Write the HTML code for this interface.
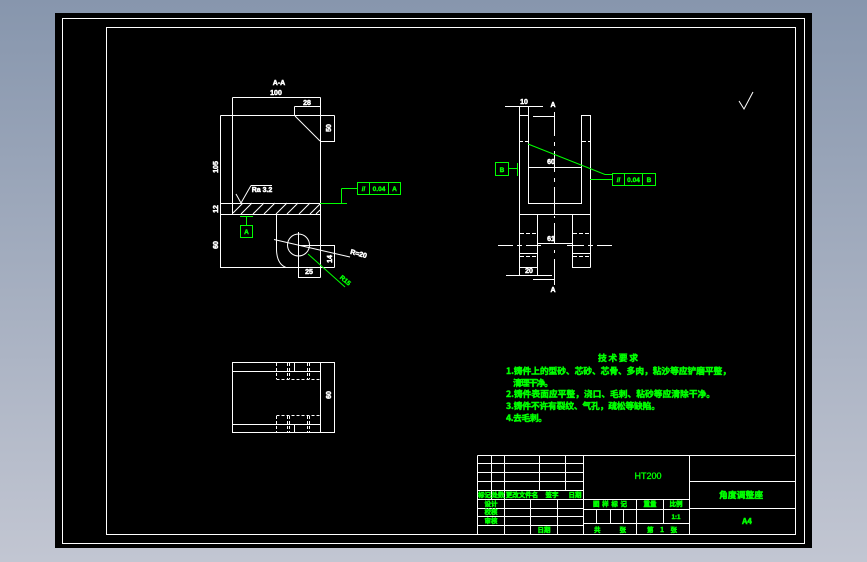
<!DOCTYPE html>
<html><head><meta charset="utf-8"><style>
html,body{margin:0;padding:0;width:867px;height:562px;overflow:hidden;background:linear-gradient(#8796ad,#c2c6d2)}
svg{position:absolute;left:0;top:0;display:block}
text{font-family:"Liberation Sans","Noto Sans CJK SC",sans-serif;font-weight:700}
.w path,.w rect,.w circle{fill:none;stroke:#fff;stroke-width:1}
.g path,.g rect{fill:none;stroke:#0f0;stroke-width:1}
.tw{fill:#fff;stroke:#fff;stroke-width:.5;font-size:7px;text-anchor:middle}
.tg{fill:#0f0;stroke:#0f0;stroke-width:.4;font-size:6.5px;text-anchor:middle}
.cn{fill:#0f0;font-size:8.8px;stroke:#0f0;stroke-width:.45;font-family:"Noto Sans CJK SC","Liberation Sans",sans-serif}
.tb{fill:#0f0;font-size:6.5px;text-anchor:middle;stroke:#0f0;stroke-width:.5;font-family:"Noto Sans CJK SC","Liberation Sans",sans-serif}
</style></head><body>
<svg width="867" height="562" viewBox="0 0 867 562" xmlns="http://www.w3.org/2000/svg">
<rect x="55" y="13" width="757" height="535" fill="#000"/>
<g class="w" shape-rendering="crispEdges">
<rect x="62.5" y="18.5" width="742" height="525"/>
<rect x="106.5" y="27.5" width="689" height="507"/>
<!-- front section -->
<path d="M232.5 97.5H320.5M232.5 97.5V214M320.5 97.5V277.5M294.5 106.5H320.5M294.5 106.5V115.5M220.5 115.5H334.5M334.5 115.5V141.5H320.5M220.5 115.5V267.5H334.5M220.5 203.5H320.5M220.5 214.5H320.5M276.5 214.5V250M298.5 245.5H334.5V267.5M298.5 245.5V277.5H320.5M251 185.500H272M298.500 232V256"/>
</g>
<g class="w">
<path d="M295 116L320 141"/>
<path d="M233 213L243 203M241 214L252 203M253 214L264 203M264 214L275 203M276 214L287 203M287 214L298 203M299 214L310 203M310 214L320 204M316 214L320 210"/>
<path d="M276.5 250Q277 264 286 267.5"/>
<circle cx="298.5" cy="245" r="11"/>
<path d="M274 239.500L350 257"/>
<path d="M236 194L241 203L251 185.500"/>
</g>
<!-- left view -->
<g class="w" shape-rendering="crispEdges">
<path d="M505 106.500H543M519.500 106.500V275.500M528.500 106.500V203.500H581.500V115.500H590.500V267.500M519.500 115.500H528.500M528.500 167.500H581.500M533 116.500H554M519.500 214.500H590.500M537.500 214.500V275.500M572.500 214.500V267.500H590.500M537.500 243.500H572.500M519.500 253.500H537.500M572.500 253.500H590.500M519.500 267.500H537.500M506 275.500H552M533 279.500H554"/>
<path d="M554.500 112V136M554.500 142V146M554.500 151V172M554.500 178V182M554.500 187V214M554.500 216V218M554.500 223V243M554.500 250V253M554.500 259V285"/>
<path d="M498 245.500H513M517 245.500H522M526 245.500H541M567 245.500H584M588 245.500H593M597 245.500H612"/>
<path stroke-dasharray="4 2" d="M519 141.500H528M582 141.500H590M520 233.500H537M573 233.500H590M520 256.500H537M573 256.500H590"/>
</g>
<!-- top view -->
<g class="w" shape-rendering="crispEdges">
<rect x="232.500" y="362.500" width="102" height="70"/>
<path d="M320.500 362.500V432.500M232.500 371.500H320.500M232.500 424.500H320.500M294.500 362.500V371.500M294.500 424.500V432.500"/>
<path stroke-dasharray="3 2" d="M276.500 363V379M287.500 363V379M289.500 363V379M307.500 363V379M309.500 363V379M276.500 379.500H320M276.500 415.500H320M276.500 416V432M287.500 416V432M289.500 416V432M307.500 416V432M309.500 416V432"/>
</g>
<path d="M739 101L744 109L753 92" fill="none" stroke="#fff" stroke-width="1"/>
<!-- title block -->
<g class="w" shape-rendering="crispEdges">
<path d="M477.500 455.500H795M477.500 455.500V534M491.500 455.500V499.500M504.500 455.500V534M539.500 455.500V490.500M565.500 455.500V490.500M583.500 455.500V534M477.500 463.500H583.500M477.500 472.500H583.500M477.500 481.500H583.500M477.500 490.500H583.500M477.500 499.500H689.500M477.500 508.500H583.500M477.500 516.500H583.500M477.500 525.500H583.500M530.500 499.500V534M557.500 499.500V534M689.500 455.500V534M583.500 509.500H689.500M583.500 523.500H689.500M596.500 509.500V523.500M610.500 509.500V523.500M623.500 509.500V523.500M636.500 499.500V534M663.500 499.500V523.500M689.500 481.500H795M689.500 508.500H795"/>
</g>
<!-- green geometry -->
<g class="g" shape-rendering="crispEdges">
<path d="M320 203.500H347M341.500 188.500V203.500M341.500 188.500H357.500"/>
<rect x="357.500" y="182.500" width="43" height="12"/>
<path d="M369.500 182.500V194.500M388.500 182.500V194.500"/>
<path d="M240 216.500H253M246.500 216.500V225"/>
<rect x="240.500" y="225.500" width="12" height="12"/>
<rect x="495.500" y="162.500" width="13" height="13"/>
<path d="M508.500 168.500H517M517.500 163V176M590 179.500H612.500"/>
<rect x="612.500" y="173.500" width="43" height="12"/>
<path d="M624.500 173.500V185.500M642.500 173.500V185.500"/>
</g>
<g class="g"><path d="M528 144L605 174.500H612"/><path d="M308 254L345 287"/></g>
<!-- dims -->
<text class="tw" x="279" y="85">A-A</text>
<text class="tw" x="276" y="95">100</text>
<text class="tw" x="307" y="105">28</text>
<text class="tw" transform="translate(331,128) rotate(-90)">50</text>
<text class="tw" transform="translate(218,167) rotate(-90)">105</text>
<text class="tw" transform="translate(218,209) rotate(-90)">12</text>
<text class="tw" transform="translate(218,245) rotate(-90)">60</text>
<text class="tw" x="262" y="192">Ra 3.2</text>
<text class="tw" transform="translate(358,256) rotate(15)">R=20</text>
<text class="tw" transform="translate(332,259) rotate(-90)">14</text>
<text class="tw" x="309" y="274">25</text>
<text class="tw" x="524" y="104">10</text>
<text class="tw" x="553" y="107">A</text>
<text class="tw" x="551" y="164">60</text>
<text class="tw" x="551" y="241">61</text>
<text class="tw" x="529" y="273">20</text>
<text class="tw" x="553" y="292">A</text>
<text class="tw" transform="translate(331,395) rotate(-90)">60</text>
<!-- green labels -->
<text class="tg" x="363.500" y="191">//</text>
<text class="tg" x="379" y="191">0.04</text>
<text class="tg" x="394.500" y="191">A</text>
<text class="tg" x="246.500" y="234">A</text>
<text class="tg" x="502" y="172">B</text>
<text class="tg" x="618.500" y="182">//</text>
<text class="tg" x="633.500" y="182">0.04</text>
<text class="tg" x="649" y="182">B</text>
<text class="tg" transform="translate(344,282) rotate(40)">R15</text>
<!-- notes -->
<text class="cn" x="598" y="361" textLength="40">技术要求</text>
<text class="cn" x="506" y="374" textLength="225">1.铸件上的型砂、芯砂、芯骨、多肉，粘沙等应铲磨平整，</text>
<text class="cn" x="513" y="386" textLength="40">清理干净。</text>
<text class="cn" x="506" y="397" textLength="209">2.铸件表面应平整，浇口、毛刺、粘砂等应清除干净。</text>
<text class="cn" x="506" y="409" textLength="154">3.铸件不许有裂纹、气孔，疏松等缺陷。</text>
<text class="cn" x="506" y="421" textLength="41">4.去毛刺。</text>
<!-- title block text -->
<text class="tb" x="484.500" y="497">标记</text>
<text class="tb" x="498" y="497">处数</text>
<text class="tb" x="522" y="497">更改文件名</text>
<text class="tb" x="552" y="497">签字</text>
<text class="tb" x="575" y="497">日期</text>
<text class="tb" x="491" y="506">设计</text>
<text class="tb" x="491" y="514">校核</text>
<text class="tb" x="491" y="523">审核</text>
<text class="tb" x="544" y="532">日期</text>
<text class="tb" x="610" y="506" textLength="34">图样标记</text>
<text class="tb" x="650" y="506">重量</text>
<text class="tb" x="676" y="506">比例</text>
<text class="tb" x="676" y="519" style="font-size:6px">1:1</text>
<text class="tb" x="610" y="532" textLength="32">共 张</text>
<text class="tb" x="662" y="532" textLength="30">第 1 张</text>
<text x="648" y="479" text-anchor="middle" style="fill:#0f0;stroke:#0f0;stroke-width:.3;font-size:9px;font-weight:400">HT200</text>
<text class="tb" x="719" y="498" style="font-size:8.800px;text-anchor:start" textLength="44">角度调整座</text>
<text class="tb" x="747" y="524" style="font-size:8px">A4</text>
</svg>
</body></html>
